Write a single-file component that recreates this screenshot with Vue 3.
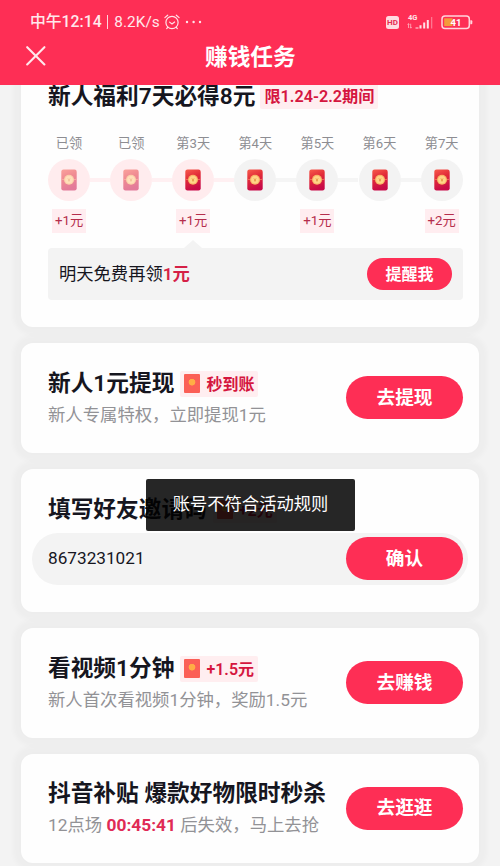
<script setup>
const days = [
  { label: '已领', state: 'done', bonus: '+1元' },
  { label: '已领', state: 'done' },
  { label: '第3天', state: 'today', bonus: '+1元' },
  { label: '第4天', state: 'next' },
  { label: '第5天', state: 'next', bonus: '+1元' },
  { label: '第6天', state: 'next' },
  { label: '第7天', state: 'next', bonus: '+2元' },
]
</script>

<template>
  <div class="screen">
    <svg class="defs" width="0" height="0" aria-hidden="true">
      <defs>
        <linearGradient id="packet" x1="0" y1="0" x2="0.3" y2="1">
          <stop offset="0" stop-color="#f85c4c" />
          <stop offset="0.45" stop-color="#e22c38" />
          <stop offset="1" stop-color="#c80a48" />
        </linearGradient>
      </defs>
    </svg>

    <header class="header">
      <div class="status">
        <div class="status-left">
          <span class="clock">中午12:14</span>
          <i class="sep"></i>
          <span class="speed">8.2K/s</span>
          <svg class="alarm" width="16" height="16" viewBox="0 0 16 16" fill="none" stroke="#ffe3e8" stroke-width="1.2" stroke-linecap="round" stroke-linejoin="round">
            <circle cx="8" cy="8.5" r="6.1" />
            <path d="M5.6 8.1 8 10l2.6-2M.9 3.6 3.7 1.2M15.1 3.6 12.3 1.2M3.7 13.3l-1 1.3M12.3 13.3l1 1.3" />
          </svg>
          <svg class="dots" width="18" height="4" viewBox="0 0 18 4" fill="#ffe3e8">
            <circle cx="2" cy="2" r="1.2" /><circle cx="8.6" cy="2" r="1.2" /><circle cx="15" cy="2" r="1.2" />
          </svg>
        </div>
        <div class="status-right">
          <span class="hd">HD</span>
          <svg class="signal" width="27" height="18" viewBox="0 0 27 18">
            <text x="1" y="7" class="net">4G</text>
            <g fill="#ffe3e8">
              <path d="M8.5 14.5h3v1h-3zM12.5 12.3h2v3.2h-2zM16.2 9.5h2v6h-2zM19.8 7h2v8.5h-2z" />
              <path d="M24 4h1.3v11.5H24z" opacity=".4" />
            </g>
            <path d="M1.5 15v-4.3M3.7 10.7V15M.6 11.6l.9-1 .8 1M3 14.2l.8 1 .9-1" fill="none" stroke="#ffb5c1" stroke-width=".8" />
          </svg>
          <svg class="battery" width="32" height="15" viewBox="0 0 32 15">
            <rect x="1" y="1" width="27.3" height="12.4" rx="3" fill="none" stroke="#ffd5dc" stroke-width="1.5" />
            <path d="M29.3 5.2h1q1 0 1 1v2q0 1-1 1h-1z" fill="#ffd5dc" />
            <path d="M3.2 3.3h8.3v7.8H3.2z" fill="#f49b3a" />
            <text x="15" y="11" text-anchor="middle" class="level">41</text>
          </svg>
        </div>
      </div>
      <div class="nav">
        <svg class="close" width="20" height="20" viewBox="0 0 20 20" fill="none" stroke="#ffe8ec" stroke-width="2.1" stroke-linecap="round">
          <path d="M1.2 1.2 18.4 18.4M18.4 1.2 1.2 18.4" />
        </svg>
        <h1>赚钱任务</h1>
      </div>
    </header>

    <main class="list">
      <section class="card checkin">
        <div class="line top"><h2>新人福利7天必得8元</h2><span class="tag period">限1.24-2.2期间</span></div>
        <div class="days">
          <div v-for="(d, i) in days" :key="i" class="day" :class="d.state">
            <span class="day-label">{{ d.label }}</span>
            <div class="circle">
              <svg width="16" height="22" viewBox="0 0 16 22">
                <rect x=".3" y=".5" width="15.4" height="21" rx="2.2" fill="url(#packet)" />
                <path d="M.5 10.2Q8 13 15.5 10.2" fill="none" stroke="#f3795c" stroke-width=".9" />
                <circle cx="8" cy="10.8" r="5" fill="#f9b468" />
                <circle cx="8" cy="10.8" r="3.8" fill="#ffd588" />
                <path d="m6.9 9.4 1.1 1.4 1.1-1.4M8 10.8v1.9M7 11.2h2" fill="none" stroke="#df8b36" stroke-width=".7" />
              </svg>
            </div>
            <span v-if="d.bonus" class="bonus">{{ d.bonus }}</span>
          </div>
        </div>
        <div class="remind">
          <span class="remind-text">明天免费再领<b>1元</b></span>
          <button class="btn small">提醒我</button>
        </div>
      </section>

      <section class="card row">
        <div class="info">
          <div class="line"><h2>新人1元提现</h2><span class="tag"><i class="red"></i>秒到账</span></div>
          <p>新人专属特权，立即提现1元</p>
        </div>
        <button class="btn">去提现</button>
      </section>

      <section class="card invite">
        <div class="line"><h2>填写好友邀请码</h2><span class="tag"><i class="red"></i>+2元</span></div>
        <div class="field"><span class="code">8673231021</span><button class="btn">确认</button></div>
      </section>

      <section class="card row video">
        <div class="info">
          <div class="line"><h2>看视频1分钟</h2><span class="tag"><i class="red"></i>+1.5元</span></div>
          <p>新人首次看视频1分钟，奖励1.5元</p>
        </div>
        <button class="btn">去赚钱</button>
      </section>

      <section class="card row sale">
        <div class="info">
          <div class="line"><h2>抖音补贴 爆款好物限时秒杀</h2></div>
          <p>12点场 <b>00:45:41</b> 后失效，马上去抢</p>
        </div>
        <button class="btn">去逛逛</button>
      </section>
    </main>

    <div class="toast">账号不符合活动规则</div>
  </div>
</template>

<style>
body { margin: 0; background: #f3f3f3; }
</style>

<style scoped>
* { box-sizing: border-box; }
.screen {
  position: relative;
  width: 500px;
  height: 866px;
  overflow: hidden;
  background: #f3f3f3;
  color: #16161f;
  font-family: Roboto, "Noto Sans CJK SC", sans-serif;
  white-space: nowrap;
}
.defs { position: absolute; }
h1, h2, p { margin: 0; }
.header {
  position: relative;
  z-index: 2;
  height: 85px;
  background: #fe2e55;
  color: #fff;
}
.status {
  display: flex;
  justify-content: space-between;
  align-items: center;
  height: 44px;
  padding: 0 27px 0 30px;
  color: #ffe8ec;
}
.status-left, .status-right { display: flex; align-items: center; }
.clock { height: 22px; font-size: 15.8px; line-height: 21px; font-weight: 500; }
.sep { width: 1.5px; height: 14px; margin: 0 6px 0 5px; background: #ffd5dc; }
.speed { height: 22px; font-size: 15.3px; line-height: 22px; letter-spacing: .1px; }
.alarm { margin-left: 4px; }
.dots { margin-left: 5px; }
.hd {
  width: 13px;
  height: 13px;
  border-radius: 2.5px;
  background: #ffdbe1;
  color: #e52c50;
  font-size: 8px;
  font-weight: 700;
  line-height: 13px;
  text-align: center;
}
.signal { margin-left: 8px; }
.net { font: 700 7.5px Roboto, sans-serif; fill: #ffe3e8; }
.battery { margin-left: 7px; }
.level { font: 700 9.5px Roboto, sans-serif; fill: #fff; }
.nav {
  display: flex;
  align-items: center;
  height: 27px;
  padding-left: 26px;
}
.close { display: block; margin-top: -3px; }
h1 { margin-left: 159px; font-size: 22.7px; line-height: 27px; font-weight: 700; }
.list { display: flex; flex-direction: column; gap: 16px; padding: 0 21px; }
.card {
  flex: none;
  border-radius: 12px;
  background: #fefefe;
  box-shadow: 0 0 5px 8px rgba(0, 0, 0, .022);
}
.checkin { height: 242px; padding: 0 16px 0 27px; border-radius: 0 0 12px 12px; }
.line { display: flex; align-items: center; height: 30px; }
.line.top { margin-top: -3px; }
h2 { font-size: 22.7px; line-height: 30px; font-weight: 600; }
.tag {
  display: flex;
  align-items: center;
  height: 26px;
  margin-left: 6px;
  padding: 0 4px 2px;
  border-radius: 2px;
  background: #ffeef0;
  color: #d5163f;
  font-size: 16px;
  font-weight: 600;
}
.period { margin: -2px 0 0 5px; font-size: 16.2px; }
.red {
  width: 16px;
  height: 19px;
  margin: 1px 6px 0 0;
  border-radius: 1px;
  background: radial-gradient(circle at 50% 43%, #ffad45 0 3px, #fb5f56 3.7px);
}
.days { display: flex; height: 122px; padding-top: 22px; }
.checkin .days { margin: -1px -9px 0 -10px; }
.day { position: relative; width: 62.1px; display: flex; flex: none; flex-direction: column; align-items: center; }
.day-label { height: 20px; font-size: 13.2px; line-height: 21px; color: #8d8d92; }
.circle {
  position: relative;
  display: flex;
  align-items: center;
  justify-content: center;
  width: 42px;
  height: 42px;
  margin-top: 6px;
  border-radius: 50%;
  background: #f3f3f3;
}
.done .circle, .today .circle { background: #ffecee; }
.done svg { opacity: .5; }
/* connector to the following day */
.day:not(:last-child) .circle::after {
  content: "";
  position: absolute;
  left: 42px;
  top: 19px;
  width: 20px;
  height: 4px;
  background: #f5f5f5;
}
.done .circle::after, .today .circle::after { background: #fff0f2 !important; }
.bonus {
  width: 34px;
  height: 24px;
  margin-top: 8px;
  background: #ffedf0;
  color: #b52d4c;
  font-size: 13.3px;
  line-height: 24px;
  text-align: center;
}
.remind {
  position: relative;
  display: flex;
  align-items: center;
  justify-content: space-between;
  height: 52px;
  margin-top: 15px;
  padding: 0 11px;
  border-radius: 4px;
  background: #f3f3f3;
  font-size: 17.3px;
}
.remind-text { padding-bottom: 4px; }
.remind b { color: #d52046; font-weight: 600; }
.remind::before {
  content: "";
  position: absolute;
  left: 136px;
  top: -8px;
  border: 9px solid transparent;
  border-top: 0;
  border-bottom: 8px solid #f3f3f3;
}
.btn {
  flex: none;
  width: 117px;
  height: 43px;
  padding: 0;
  border: 0;
  border-radius: 22px;
  background: #fe2e55;
  color: #fff;
  font: 700 18.7px/42px Roboto, "Noto Sans CJK SC", sans-serif;
}
.btn.small { width: 85px; height: 32px; font-size: 16px; line-height: 29px; }
.row { display: flex; justify-content: space-between; height: 109.5px; padding: 33px 16px 0 27px; }
.row .line { margin-top: -7px; }
.info { width: 0; }
p { margin-top: 3px; font-size: 17.35px; line-height: 26px; color: #929296; }
p b { color: #e02a55; font-weight: 700; }
.sale .line { margin-top: -8px; }
.invite { height: 143.5px; padding: 26px 11px 0; }
.invite .line { padding-left: 16px; }
.field {
  display: flex;
  align-items: center;
  justify-content: space-between;
  height: 52px;
  margin-top: 8px;
  padding: 0 5px 0 16px;
  border-radius: 26px;
  background: #f3f3f3;
  font-size: 17.2px;
}
.code { padding-bottom: 1px; }
.toast {
  position: absolute;
  z-index: 3;
  left: 146px;
  top: 479px;
  width: 209px;
  height: 52px;
  border-radius: 2px;
  background: rgba(0, 0, 0, .85);
  color: #fff;
  font-size: 17.3px;
  line-height: 51px;
  text-align: center;
}
</style>
